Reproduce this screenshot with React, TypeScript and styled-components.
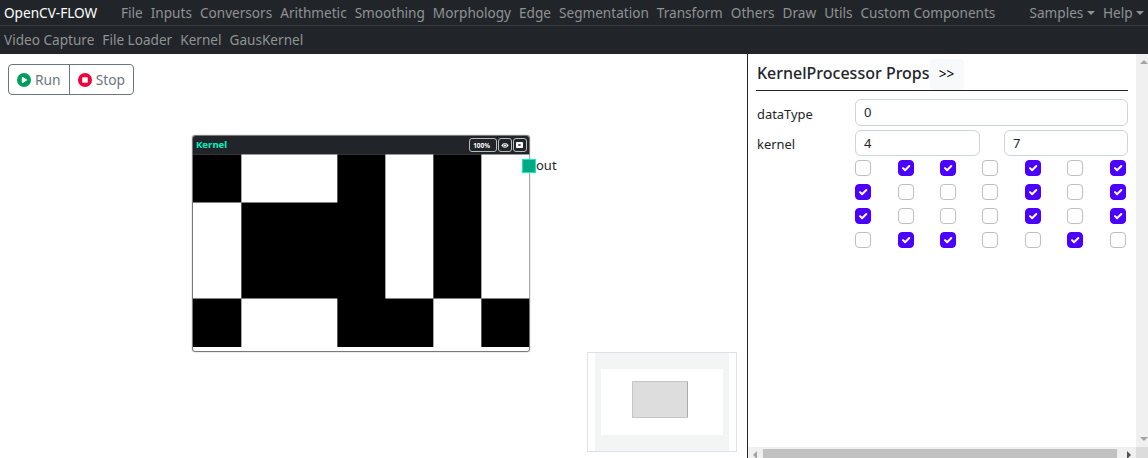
import React from "react";
import styled, { createGlobalStyle } from "styled-components";

const GlobalStyle = createGlobalStyle`
  *, *::before, *::after { box-sizing: border-box; }
  body { margin: 0; background: #fff; color: #212529; font-family: "Noto Sans", sans-serif; overflow: hidden; }
`;

const Page = styled.div`
  display: flex;
  flex-direction: column;
  width: 100%;
  height: 458px;
`;

const NavBar = styled.nav`
  display: flex;
  align-items: center;
  height: 26px;
  padding: 0 4px;
  background: #212529;
  border-bottom: 1px solid #373b3e;
  font-size: 13.6px;
  line-height: 21px;
  white-space: nowrap;
`;

const SubBar = styled(NavBar)`
  height: 28px;
  padding-bottom: 2px;
  border-bottom: 0;
`;

const Brand = styled.span`
  width: 117px;
  color: #fff;
`;

const Menu = styled.div<{ $right?: boolean }>`
  display: flex;
  gap: 8px;
  margin-left: ${(p) => (p.$right ? "auto" : "0")};
`;

const MenuLink = styled.span<{ $caret?: boolean }>`
  color: #909294;
  &::after {
    content: ${(p) => (p.$caret ? '""' : "none")};
    display: inline-block;
    margin-left: 3.5px;
    vertical-align: 3.5px;
    border-top: 4px solid;
    border-left: 4px solid transparent;
    border-right: 4px solid transparent;
  }
`;

const Main = styled.main`
  display: flex;
  flex: 1;
  min-height: 0;
`;

const Canvas = styled.section`
  position: relative;
  width: 747px;
  padding: 10px 8px;
`;

const ButtonGroup = styled.div`
  display: inline-flex;
  height: 31px;
  border: 1px solid #6c757d;
  border-radius: 4px;
`;

const RunButton = styled.button`
  display: flex;
  align-items: center;
  gap: 4px;
  padding: 0 8px;
  border: 0;
  background: transparent;
  color: #6c757d;
  font: 13.8px/21px "Noto Sans", sans-serif;
  & + & { border-left: 1px solid #6c757d; }
`;

const Node = styled.div`
  position: absolute;
  left: 192px;
  top: 81px;
  width: 338px;
  height: 217px;
  border: 1px solid #77797b;
  border-radius: 3px;
  box-shadow: 0 0 1px #555;
`;

const NodeHeader = styled.header`
  display: flex;
  align-items: center;
  justify-content: space-between;
  height: 19px;
  padding: 0 2px 0 3px;
  background: #212529;
  border-bottom: 1px solid #55585b;
  border-radius: 2px 2px 0 0;
`;

const NodeTitle = styled.span`
  color: #00f2c3;
  font-size: 9.6px;
  font-weight: 700;
  line-height: 14px;
`;

const NodeTools = styled.div`
  display: flex;
  gap: 0.5px;
`;

const NodeTool = styled.span<{ $wide?: boolean }>`
  display: flex;
  align-items: center;
  justify-content: ${(p) => (p.$wide ? "flex-start" : "center")};
  width: ${(p) => (p.$wide ? 28 : 14.4)}px;
  height: 14px;
  padding-left: ${(p) => (p.$wide ? 3 : 0)}px;
  border: 1px solid #b9bbbc;
  border-radius: 3px;
  color: #fff;
  font-size: 6.4px;
  line-height: 11px;
  font-weight: 700;
`;

const Preview = styled.svg`
  display: block;
  width: 337px;
  height: 193px;
  margin-top: -1px;
`;

const Port = styled.div`
  position: absolute;
  left: 329px;
  top: 23px;
  display: flex;
  align-items: flex-start;
  font-size: 13px;
  line-height: 12px;
`;

const PortBox = styled.span`
  width: 14px;
  height: 14px;
  background: #00a984;
  border: 1px solid #00f2c3;
`;

const MiniMap = styled.div`
  position: absolute;
  left: 587px;
  top: 298px;
  width: 150px;
  height: 100px;
  padding: 0 7px;
  border: 1px solid #dee2e6;
  background: #fff;
`;

const MiniMask = styled.div`
  height: 98px;
  padding: 16px 6px;
  background: #f3f5f5;
`;

const MiniView = styled.div`
  height: 66px;
  padding: 12px 35px 17px 31px;
  background: #fff;
`;

const MiniNode = styled.div`
  width: 56px;
  height: 37px;
  background: #ddd;
  border: 1px solid #c6c6c6;
  border-right-color: #aaa;
  border-radius: 1px;
`;

const SidePanel = styled.aside`
  display: grid;
  grid-template-columns: 388px 12px;
  grid-template-rows: 393px 11px;
  flex: 1;
  border-left: 1px solid #212529;
  overflow: hidden;
`;

const Props = styled.div`
  padding: 4px 8px;
`;

const PropsHeader = styled.header`
  display: flex;
  align-items: center;
  height: 33px;
  border-bottom: 1px solid #212529;
`;

const PropsTitle = styled.h1`
  margin: 0 0 2px;
  padding-left: 1px;
  font-size: 16px;
  font-weight: 500;
  line-height: 24px;
  white-space: nowrap;
`;

const CollapseButton = styled.button`
  width: 34px;
  height: 31px;
  margin-top: 1px;
  padding: 0 0 1px;
  border: 0;
  border-radius: 4px;
  background: #f8f9fa;
  color: #000;
  font: 13.6px/30px "Noto Sans", sans-serif;
`;

const Field = styled.div`
  display: grid;
  grid-template-columns: 98px 1fr;
  padding-left: 1px;
`;

const Label = styled.label<{ $top: number }>`
  padding-top: ${(p) => p.$top}px;
  font-size: 12.9px;
  line-height: 20px;
`;

const Inputs = styled.div`
  display: flex;
  justify-content: space-between;
`;

const TextInput = styled.input<{ $w: number; $h: number }>`
  width: ${(p) => p.$w}px;
  height: ${(p) => p.$h}px;
  padding: 0 8px 1px;
  border: 1px solid #ced4da;
  border-radius: 6px;
  outline: 0;
  background: #fff;
  color: #212529;
  font: 13px/20px "Noto Sans", sans-serif;
`;

const FieldList = styled.div`
  display: grid;
  gap: 4px;
  padding-top: 8px;
`;

const Matrix = styled.div`
  display: grid;
  grid-template-columns: repeat(7, 42.38px);
  grid-auto-rows: 24px;
  margin: 4px 0 0 99.3px;
`;

const Check = styled.span<{ $on: boolean }>`
  display: block;
  width: 16px;
  height: 16px;
  border: 1px solid ${(p) => (p.$on ? "#4b00ff" : "#bfbfbf")};
  border-radius: 4px;
  background: ${(p) => (p.$on ? "#4b00ff" : "#fff")};
  svg { display: block; }
`;

const VScroll = styled.div`
  display: flex;
  flex-direction: column;
  align-items: center;
  justify-content: space-between;
  padding: 6px 0 6px 3px;
  background: #f0f0f0;
`;

const HScroll = styled.div`
  display: flex;
  align-items: center;
  gap: 6px;
  padding: 2px 5px 0;
  background: #f0f0f0;
`;

const Thumb = styled.div`
  flex: 1;
  height: 9px;
  margin-right: 4px;
  background: #c1c1c1;
`;

const Corner = styled.div`
  background: #dcdcdc;
`;

const Arrow = styled.i<{ $dir: "up" | "down" | "left" | "right" }>`
  width: 0;
  height: 0;
  border: 4px solid transparent;
  ${(p) =>
    ({
      up: "border-top: 0; border-bottom-color: #a3a3a3;",
      down: "border-bottom: 0; border-top-color: #a3a3a3;",
      left: "border-left: 0; border-right-color: #a3a3a3; margin-top: 2px;",
      right: "border-right: 0; border-left-color: #505050; margin-top: 2px;",
    })[p.$dir]}
`;

const menus = ["File", "Inputs", "Conversors", "Arithmetic", "Smoothing", "Morphology", "Edge", "Segmentation", "Transform", "Others", "Draw", "Utils", "Custom Components"];
const tools = ["Video Capture", "File Loader", "Kernel", "GausKernel"];

const kernel = [
  [0, 1, 1, 0, 1, 0, 1],
  [1, 0, 0, 0, 1, 0, 1],
  [1, 0, 0, 0, 1, 0, 1],
  [0, 1, 1, 0, 0, 1, 0],
];

// Merges neighbouring lit cells into one outline so no seams show between them.
const litPath = "M48 0h96v48h-96z M192 0h48v144h-48z M288 0h48v144h-48z M-1 48h49v96h-49z M48 144h96v50h-96z M240 144h48v50h-48z";

const KernelPreview = () => (
  <Preview viewBox="0 0 337 193">
    <rect width="336" height="192.4" x="0" y="0.6" fill="#000" />
    <path d={litPath} fill="#fff" transform="translate(.35 .6)" />
  </Preview>
);

const PlayIcon = () => (
  <svg width="14" height="14" viewBox="0 0 14 14">
    <circle cx="7" cy="7" r="7" fill="#009e5c" />
    <path d="M5.4 4.5 9.4 7l-4 2.5z" fill="#fff" stroke="#fff" strokeWidth="1.2" strokeLinejoin="round" />
  </svg>
);

const StopIcon = () => (
  <svg width="14" height="14" viewBox="0 0 14 14">
    <circle cx="7" cy="7" r="7" fill="#f0003c" />
    <rect x="4.2" y="4.2" width="5.6" height="5.6" rx=".7" fill="#fff" />
  </svg>
);

const EyeIcon = () => (
  <svg width="8" height="7" viewBox="0 0 8 7">
    <path d="M.3 3.5Q4-1.4 7.7 3.5 4 8.4.3 3.5z" fill="#fff" />
    <circle cx="4" cy="3.5" r="1.5" fill="none" stroke="#212529" strokeWidth=".7" />
  </svg>
);

const CloseIcon = () => (
  <svg width="7" height="6" viewBox="0 0 7 6">
    <rect width="7" height="6" rx=".7" fill="#fff" />
    <path d="m2.4 1.9 2.2 2.2m0-2.2L2.4 4.1" stroke="#212529" strokeWidth="1" />
  </svg>
);

const CheckMark = () => (
  <svg width="14" height="14" viewBox="0 0 14 14">
    <path d="m4 7.1 2.1 2.1 4.2-4.2" fill="none" stroke="#fff" strokeWidth="2" strokeLinecap="round" strokeLinejoin="round" />
  </svg>
);

export default function App() {
  return (
    <Page>
      <GlobalStyle />
      <NavBar>
        <Brand>OpenCV-FLOW</Brand>
        <Menu>{menus.map((m) => <MenuLink key={m}>{m}</MenuLink>)}</Menu>
        <Menu $right>
          <MenuLink $caret>Samples</MenuLink>
          <MenuLink $caret>Help</MenuLink>
        </Menu>
      </NavBar>
      <SubBar>
        <Menu>{tools.map((t) => <MenuLink key={t}>{t}</MenuLink>)}</Menu>
      </SubBar>
      <Main>
        <Canvas>
          <ButtonGroup>
            <RunButton><PlayIcon />Run</RunButton>
            <RunButton><StopIcon />Stop</RunButton>
          </ButtonGroup>
          <Node>
            <NodeHeader>
              <NodeTitle>Kernel</NodeTitle>
              <NodeTools>
                <NodeTool $wide>100%</NodeTool>
                <NodeTool><EyeIcon /></NodeTool>
                <NodeTool><CloseIcon /></NodeTool>
              </NodeTools>
            </NodeHeader>
            <KernelPreview />
            <Port><PortBox />out</Port>
          </Node>
          <MiniMap>
            <MiniMask><MiniView><MiniNode /></MiniView></MiniMask>
          </MiniMap>
        </Canvas>
        <SidePanel>
          <Props>
            <PropsHeader>
              <PropsTitle>KernelProcessor Props</PropsTitle>
              <CollapseButton>&gt;&gt;</CollapseButton>
            </PropsHeader>
            <FieldList>
              <Field>
                <Label $top={5}>dataType</Label>
                <Inputs><TextInput $w={273} $h={27} defaultValue="0" /></Inputs>
              </Field>
              <Field>
                <Label $top={4}>kernel</Label>
                <Inputs>
                  <TextInput $w={125} $h={26} defaultValue="4" />
                  <TextInput $w={124} $h={26} defaultValue="7" />
                </Inputs>
              </Field>
            </FieldList>
            <Matrix>
              {kernel.flatMap((row, r) =>
                row.map((v, c) => <Check key={`${r}-${c}`} $on={v === 1}>{v === 1 && <CheckMark />}</Check>)
              )}
            </Matrix>
          </Props>
          <VScroll><Arrow $dir="up" /><Arrow $dir="down" /></VScroll>
          <HScroll><Arrow $dir="left" /><Thumb /><Arrow $dir="right" /></HScroll>
          <Corner />
        </SidePanel>
      </Main>
    </Page>
  );
}
